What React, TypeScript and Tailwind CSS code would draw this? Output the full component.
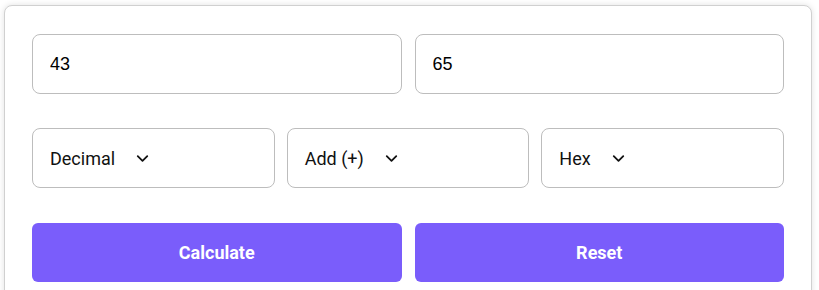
import { ChevronDown } from "lucide-react"

const selects = ["Decimal", "Add (+)", "Hex"]

export default function App() {
  return (
    <div className="min-h-screen bg-white pl-[4px] pt-[5px] pr-[7px]">
      <div className="rounded-[8px] border border-[#d0d0d0] bg-white px-[27px] pt-[28px] pb-[30px] shadow-[0_0_6px_rgba(0,0,0,0.12)]">
        <div className="grid grid-cols-2 gap-[13px]">
          <input
            defaultValue="43"
            className="h-[60px] rounded-[8px] border border-[#bdbdbd] px-[17px] text-[18px] text-black outline-none font-['Liberation_Sans',Arial,sans-serif]"
          />
          <input
            defaultValue="65"
            className="h-[60px] rounded-[8px] border border-[#bdbdbd] px-[17px] text-[18px] text-black outline-none font-['Liberation_Sans',Arial,sans-serif]"
          />
        </div>

        <div className="mt-[34px] grid grid-cols-3 gap-[12px]">
          {selects.map((label) => (
            <div
              key={label}
              className="flex h-[60px] items-center gap-[18px] rounded-[8px] border border-[#bdbdbd] px-[17px] text-[18px] text-[#111] font-['Roboto',sans-serif]"
            >
              <span>{label}</span>
              <ChevronDown className="size-[19px]" strokeWidth={2.25} />
            </div>
          ))}
        </div>

        <div className="mt-[35px] grid grid-cols-2 gap-[13px]">
          <button className="h-[59px] rounded-[6px] bg-[#7a5dfb] text-[18px] font-bold text-white font-['Roboto',sans-serif]">
            Calculate
          </button>
          <button className="h-[59px] rounded-[6px] bg-[#7a5dfb] text-[18px] font-bold text-white font-['Roboto',sans-serif]">
            Reset
          </button>
        </div>
      </div>
    </div>
  )
}
